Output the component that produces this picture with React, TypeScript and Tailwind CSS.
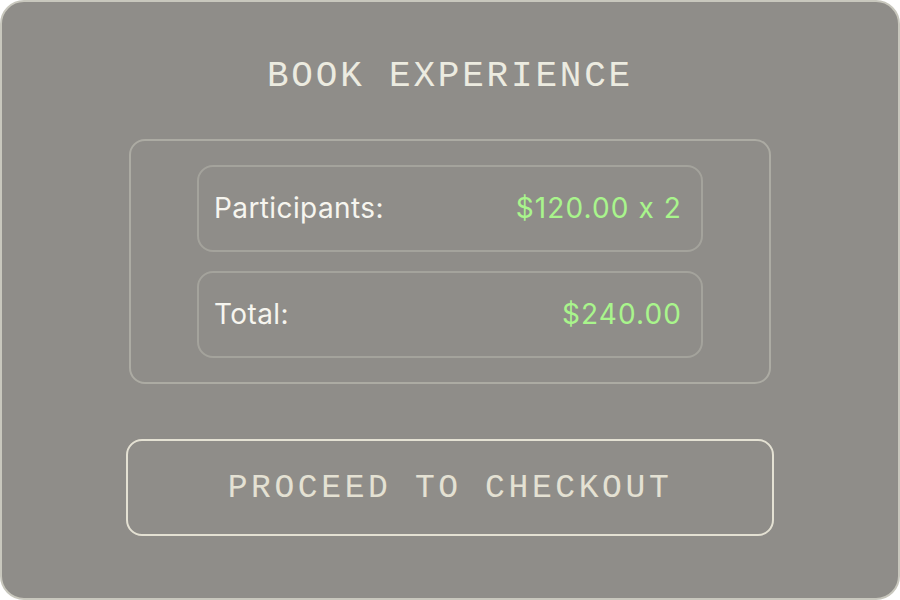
import React from "react";

export default function App() {
  const mono = { fontFamily: '"Liberation Mono", "DejaVu Sans Mono", monospace' };
  const sans = { fontFamily: 'Inter, "Noto Sans", sans-serif' };
  return (
    <div className="w-[900px] h-[600px] bg-white">
      <div className="w-[900px] h-[600px] box-border rounded-[24px] border-2 border-[#c8c7bd] bg-[#8f8d89] flex flex-col items-center">
        <h1
          className="mt-[53px] text-[36px] leading-[44px] tracking-[2.8px] text-[#ecebe0] font-normal"
          style={mono}
        >
          BOOK EXPERIENCE
        </h1>
        <div className="mt-[40px] w-[642px] h-[245px] box-border rounded-[16px] border-2 border-[#acaba3] px-[66px] py-[24px] flex flex-col gap-[19px]">
          <div className="h-[87px] box-border rounded-[16px] border-2 border-[#a4a39c] flex items-center justify-between pl-[15px] pr-[19px] pb-[2px] text-[28px] tracking-[0.4px] [font-feature-settings:'calt'_0]" style={sans}>
            <span className="text-[#f6f5ef]">Participants:</span>
            <span className="text-[#a9f58c] tracking-[1.1px]">$120.00 x 2</span>
          </div>
          <div className="h-[87px] box-border rounded-[16px] border-2 border-[#a4a39c] flex items-center justify-between pl-[15px] pr-[19px] pb-[2px] text-[28px] tracking-[0.4px] [font-feature-settings:'calt'_0]" style={sans}>
            <span className="text-[#f6f5ef]">Total:</span>
            <span className="text-[#a9f58c] tracking-[1.1px]">$240.00</span>
          </div>
        </div>
        <button
          className="mt-[55px] w-[648px] h-[97px] box-border rounded-[16px] border-2 border-[#e4e1d3] text-[33px] tracking-[3.6px] text-[#e4e1d3] flex items-center justify-center pt-[2px]"
          style={mono}
        >
          PROCEED TO CHECKOUT
        </button>
      </div>
    </div>
  );
}
